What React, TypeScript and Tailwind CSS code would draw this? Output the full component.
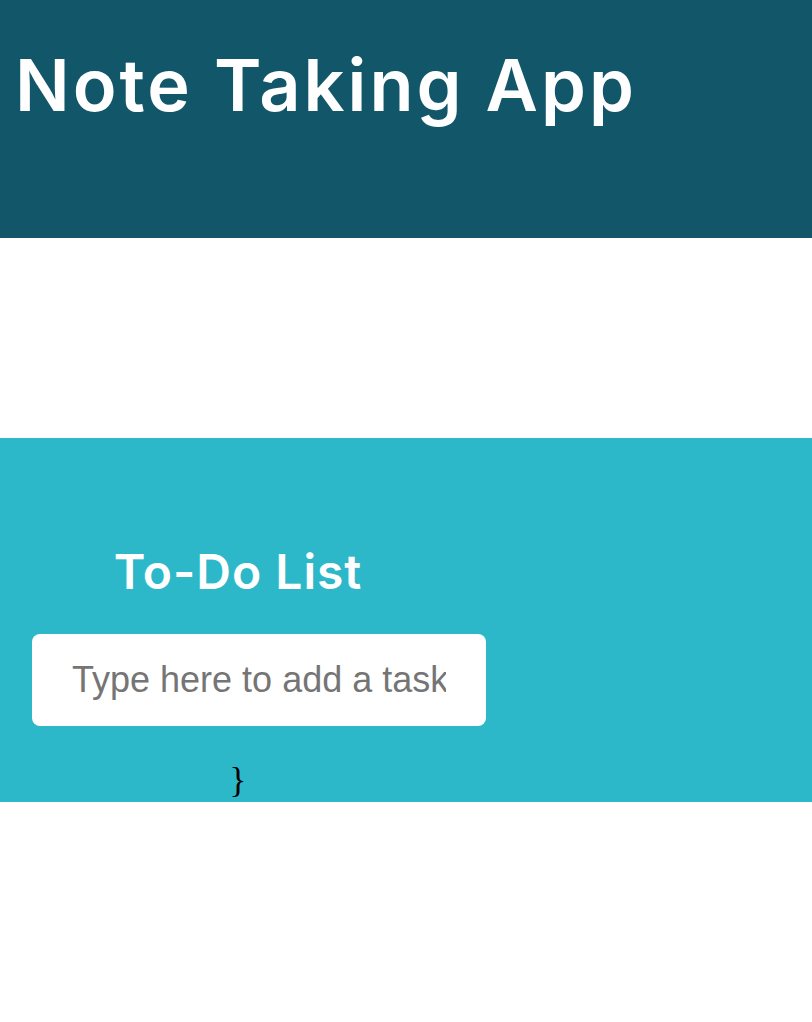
export default function App() {
  return (
    <div className="min-h-[1022px] bg-white">
      {/* Header */}
      <header className="h-[238px] bg-[#12566a] px-[15px] pt-[40px]">
        <h1 className="font-['Inter',sans-serif] text-[72px] font-semibold leading-[90px] text-white tracking-[3px]">
          Note Taking App
        </h1>
      </header>

      {/* To-Do section */}
      <section className="mt-[200px] h-[364px] bg-[#2cb8c9] px-[32px] pt-[104px]">
        <div className="w-[454px]">
          <h2 className="text-center font-['Inter',sans-serif] text-[48px] font-semibold leading-[60px] tracking-[1px] text-white pr-[42px]">
            To-Do List
          </h2>
          <input
            type="text"
            placeholder="Type here to add a task"
            className="mt-[32px] block h-[92px] w-[454px] rounded-[8px] bg-white px-[40px] font-['Liberation_Sans',Arial,sans-serif] text-[36px] text-[#333] placeholder:text-[#757575] outline-none"
          />
          <div className="mt-[37px] pr-[42px] text-center font-['Liberation_Serif',serif] text-[35px] leading-[36px] text-black">
            {"}"}
          </div>
        </div>
      </section>
    </div>
  );
}
